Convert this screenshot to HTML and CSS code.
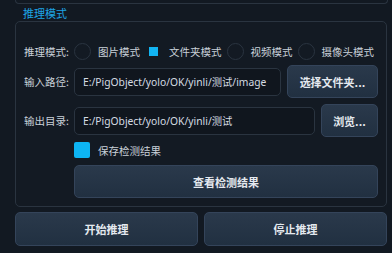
FILE: index.html
```html
<!DOCTYPE html>
<html lang="zh-CN">
<head>
<meta charset="utf-8">
<link rel="stylesheet" href="styles.css">
</head>
<body>
<div class="stub"></div>
<div class="title">推理模式</div>
<div class="group">
  <div class="row mode-row">
    <span class="label">推理模式:</span>
    <div class="options">
      <span class="radio"></span><span class="opt">图片模式</span>
      <span class="radio checked"></span><span class="opt">文件夹模式</span>
      <span class="radio"></span><span class="opt">视频模式</span>
      <span class="radio"></span><span class="opt">摄像头模式</span>
    </div>
  </div>
  <div class="row field-row">
    <span class="label">输入路径:</span>
    <div class="input">E:/PigObject/yolo/OK/yinli/测试/image</div>
    <button class="btn btn-side wide">选择文件夹...</button>
  </div>
  <div class="row field-row">
    <span class="label">输出目录:</span>
    <div class="input">E:/PigObject/yolo/OK/yinli/测试</div>
    <button class="btn btn-side narrow">浏览...</button>
  </div>
  <div class="row check-row">
    <span class="check"></span><span class="opt">保存检测结果</span>
  </div>
  <div class="row view-row">
    <button class="btn btn-view">查看检测结果</button>
  </div>
</div>
<div class="actions">
  <button class="btn btn-act">开始推理</button>
  <button class="btn btn-act">停止推理</button>
</div>
</body>
</html>
```
FILE: styles.css
```css
html, body {
  margin: 0;
  padding: 0;
  background: #121922;
  width: 392px;
  height: 253px;
  overflow: hidden;
  font-family: "Noto Sans", "Noto Sans CJK SC", sans-serif;
  font-size: 10.5px;
  color: #c9d1d9;
}
.stub {
  height: 3px;
  margin: 0 4px 0 15px;
  border: 1px solid #2a3440;
  border-top: none;
  border-radius: 0 0 4px 4px;
}
.title {
  height: 17px;
  line-height: 15px;
  padding-top: 2px;
  box-sizing: border-box;
  margin-left: 23px;
  color: #1ea4e4;
  font-size: 11px;
  font-family: "Noto Sans CJK SC", sans-serif;
}
.group {
  margin: 0 5px 0 15px;
  border: 1px solid #2a3440;
  border-radius: 5px;
  background: #131a23;
  padding: 21px 8px 8px 8px;
  display: flex;
  flex-direction: column;
}
.row {
  display: flex;
  align-items: center;
}
.label {
  width: 50px;
  flex: none;
  font-family: "Noto Sans CJK SC", sans-serif;
}
.mode-row { height: 17px; }
.options {
  display: flex;
  align-items: center;
}
.radio {
  width: 17px;
  height: 17px;
  box-sizing: border-box;
  border: 1px solid #2a3440;
  border-radius: 50%;
  margin-right: 7px;
  flex: none;
}
.radio.checked {
  border: none;
  border-radius: 0;
  display: flex;
  align-items: center;
  justify-content: center;
}
.radio.checked::after {
  content: "";
  width: 9px;
  height: 9px;
  background: #12b4f2;
}
.opt {
  font-family: "Noto Sans CJK SC", sans-serif;
  margin-right: 5px;
  white-space: nowrap;
}
.field-row {
  height: 33px;
  margin-top: 5px;
}
.field-row + .field-row { margin-top: 6px; }
.input {
  flex: 1;
  height: 28px;
  box-sizing: border-box;
  border: 1px solid #2a3440;
  border-radius: 5px;
  background: #10161e;
  padding-left: 8px;
  line-height: 26px;
  font-size: 10.3px;
  color: #d5dce3;
  white-space: nowrap;
  overflow: hidden;
}
.btn {
  font-family: "Noto Sans CJK SC", sans-serif;
  font-size: 11px;
  font-weight: bold;
  color: #e4e9ef;
  background: linear-gradient(#2a394b, #213041);
  border: 1px solid #34445a;
  border-radius: 5px;
  padding: 0;
  margin: 0;
  cursor: pointer;
}
.btn-side {
  height: 33px;
  flex: none;
  margin-left: 6px;
}
.btn-side.wide { width: 91px; }
.btn-side.narrow { width: 57px; }
.check-row {
  height: 16px;
  margin-top: 5px;
  padding-left: 50px;
}
.check {
  width: 16px;
  height: 16px;
  background: #0db4f3;
  border-radius: 2px;
  margin-right: 8px;
}
.view-row {
  margin-top: 7px;
  padding-left: 50px;
}
.btn-view {
  flex: 1;
  height: 33px;
}
.actions {
  display: flex;
  gap: 6px;
  margin: 5px 5px 0 15px;
}
.btn-act {
  flex: 1;
  height: 34px;
}
```
